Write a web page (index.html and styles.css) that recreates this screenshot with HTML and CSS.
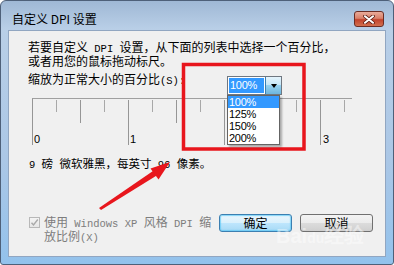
FILE: index.html
```html
<!DOCTYPE html>
<html lang="zh-CN">
<head>
    <meta charset="UTF-8">
    <meta name="viewport" content="width=device-width, initial-scale=1.0">
    <title>自定义 DPI 设置</title>
    <link rel="stylesheet" href="styles.css">
</head>
<body>
    <div class="window">
        <!-- Title bar -->
        <div class="titlebar">
            <span class="title">自定义 DPI 设置</span>
            <span class="close-btn">
                <svg width="12" height="9" viewBox="0 0 12 9">
                    <path d="M2 1.2 L10 7.8 M10 1.2 L2 7.8" stroke="#5a1d14" stroke-width="3.6" stroke-linecap="round"/>
                    <path d="M2 1.2 L10 7.8 M10 1.2 L2 7.8" stroke="#fff" stroke-width="2" stroke-linecap="round"/>
                </svg>
            </span>
        </div>

        <!-- Client area -->
        <div class="client">
            <p class="intro">若要自定义<span class="mono"> DPI </span>设置，从下面的列表中选择一个百分比，<br>或者用您的鼠标拖动标尺。</p>

            <div class="scale-row">
                <span class="scale-label">缩放为正常大小的百分比<span class="mono">(S):</span></span>
                <div class="combo">
                    <span class="combo-value">100%</span>
                    <span class="combo-btn"><span class="arrow-down"></span></span>
                    <ul class="droplist">
                        <li class="selected">100%</li>
                        <li>125%</li>
                        <li>150%</li>
                        <li>200%</li>
                    </ul>
                </div>
            </div>

            <!-- Ruler, the "2" label sits under the open list -->
            <div class="ruler">
                <span class="ruler-label">0</span>
                <span class="ruler-label">1</span>
                <span class="ruler-label"></span>
                <span class="ruler-label">3</span>
            </div>

            <p class="info"><span class="mono">9 </span>磅<span class="mono"> </span>微软雅黑，每英寸<span class="mono"> 96 </span>像素。</p>

            <div class="footer">
                <div class="xp-option">
                    <span class="checkbox">
                        <svg width="9" height="9" viewBox="0 0 9 9">
                            <path d="M1.5 4.8 L3.5 7 L7.8 1.5" stroke="#a9a9a9" stroke-width="1.4" fill="none"/>
                        </svg>
                    </span>
                    <span class="xp-text">使用<span class="mono"> Windows XP </span>风格<span class="mono"> DPI </span>缩<br>放比例<span class="mono">(X)</span></span>
                </div>
                <div class="buttons">
                    <button class="btn btn-default">确定</button>
                    <button class="btn">取消</button>
                </div>
            </div>
        </div>
    </div>

    <!-- Red annotation drawn over the dialog -->
    <svg class="annotation" width="394" height="265" viewBox="0 0 394 265">
        <rect x="183.5" y="64.5" width="120.5" height="84.5" fill="none" stroke="#e8161d" stroke-width="3.5"/>
        <polygon points="99,208 101,210 157.5,175 153,171" fill="#e8161d"/>
        <polygon points="170,162 150.5,168.5 158.5,179.5" fill="#e8161d"/>
    </svg>

    <div class="watermark">Bai<span class="paw">du</span>经验</div>
</body>
</html>
```

FILE: styles.css
```css
/* Dialog window, Windows 7 style */
body {
    margin: 0;
    font-family: "Noto Sans CJK SC", sans-serif;
    font-size: 12px;
    color: #000;
    background-color: #fff;
}

.mono {
    font-family: "Liberation Mono", monospace;
    font-size: 10.5px;
}

.window {
    width: 394px;
    height: 265px;
    box-sizing: border-box;
    border: 1px solid #4e6079;
    border-radius: 6px 6px 3px 3px;
    background: linear-gradient(#9fb8d5 0, #b9cfe7 28px, #abc7e6 60%, #93c2ec 100%);
    display: flex;
    flex-direction: column;
}

/* Title bar */
.titlebar {
    height: 29px;
    display: flex;
    align-items: flex-start;
    padding-left: 11px;
}

.title {
    margin-top: 11px;
    line-height: 14px;
}

.close-btn {
    width: 30px;
    height: 16px;
    box-sizing: border-box;
    margin: 10px 9px 0 auto;
    border: 1px solid #6b2d24;
    border-radius: 3px;
    background: linear-gradient(#e9ab9a 0, #d9806a 45%, #c2432c 55%, #d2704f 100%);
    display: flex;
    align-items: center;
    justify-content: center;
}

/* Client area */
.client {
    height: 227px;
    box-sizing: border-box;
    margin: 0 7px;
    padding: 10px 12px 0 19px;
    border: 1px solid #91a6c1;
    background-color: #f0f0f0;
    display: flex;
    flex-direction: column;
}

.intro {
    margin: 0;
    line-height: 11px;
}

.scale-row {
    display: flex;
    align-items: flex-start;
    margin-top: 7px;
}

.scale-label {
    width: 199px;
    line-height: 12px;
}

/* Combo box */
.combo {
    position: relative;
    width: 55px;
    height: 19px;
    box-sizing: border-box;
    margin-top: 3px;
    border: 1px solid #6f7780;
    background-color: #fff;
    display: flex;
}

.combo-value {
    flex: 1;
    margin: 1px;
    padding-left: 1px;
    background-color: #3399ff;
    color: #fff;
    font-family: "Liberation Sans", sans-serif;
    font-size: 11px;
    line-height: 15px;
    letter-spacing: -0.3px;
}

.combo-btn {
    width: 15px;
    border-left: 1px solid #3c7fb1;
    background: linear-gradient(#e5f4fc 0, #c4e5f6 50%, #98d1ef 50%, #6cb6de 100%);
    display: flex;
    align-items: center;
    justify-content: center;
}

.arrow-down {
    width: 0;
    height: 0;
    border-left: 3.5px solid transparent;
    border-right: 3.5px solid transparent;
    border-top: 4px solid #000;
}

.droplist {
    position: absolute;
    z-index: 2;
    top: 18px;
    left: -1px;
    width: 51px;
    margin: 0;
    padding: 0;
    list-style: none;
    border: 1px solid #646464;
    background-color: #fff;
    box-shadow: 2px 2px 2px rgba(0, 0, 0, 0.3);
    font-family: "Liberation Sans", sans-serif;
    font-size: 11px;
    letter-spacing: -0.3px;
}

.droplist li {
    height: 12px;
    line-height: 12px;
    padding-left: 1px;
}

.droplist li.selected {
    background-color: #3399ff;
    color: #fff;
}

/* Ruler */
.ruler {
    width: 320px;
    height: 47px;
    box-sizing: border-box;
    margin: 3px 0 0 4px;
    border-top: 1px solid #a0a0a0;
    border-left: 1px solid #969696;
    background:
        repeating-linear-gradient(to right, transparent 0 95px, #969696 95px 96px) 0 1px / 100% 100% no-repeat,
        repeating-linear-gradient(to right, transparent 0 47px, #969696 47px 48px, transparent 48px 96px) 0 1px / 100% 23px no-repeat,
        repeating-linear-gradient(to right, transparent 0 23px, #a8a8a8 23px 24px, transparent 24px 48px) 0 1px / 100% 12px no-repeat;
    display: flex;
    align-items: flex-end;
}

.ruler-label {
    flex: none;
    width: 96px;
    height: 11px;
    padding-left: 1px;
    box-sizing: border-box;
    font-family: "Liberation Sans", sans-serif;
    font-size: 11px;
    line-height: 11px;
}

.ruler-label:last-child {
    width: auto;
    padding-left: 2px;
}

.info {
    margin: 12px 0 0 1px;
    font-size: 11.5px;
    line-height: 12px;
}

/* Bottom row */
.footer {
    margin-top: auto;
    margin-bottom: 12px;
    display: flex;
    align-items: flex-start;
}

.xp-option {
    display: flex;
    align-items: flex-start;
    margin: 2px 0 0 1px;
    color: #7d7d7d;
}

.checkbox {
    width: 11px;
    height: 11px;
    box-sizing: border-box;
    margin: 1px 4px 0 0;
    border: 1px solid #b8b8b8;
    background: linear-gradient(#f4f4f4, #e6e6e6);
    display: flex;
    align-items: center;
    justify-content: center;
}

.xp-text {
    line-height: 11px;
}

.buttons {
    margin-left: auto;
    display: flex;
    gap: 8px;
}

.btn {
    width: 73px;
    height: 18px;
    box-sizing: border-box;
    padding: 0;
    border: 1px solid #707070;
    border-radius: 3px;
    background: linear-gradient(#f3f3f3 0, #ebebeb 50%, #dcdcdc 50%, #cfcfcf 100%);
    font-family: "Noto Sans CJK SC", sans-serif;
    font-size: 12px;
    line-height: 16px;
    color: #000;
}

.btn-default {
    border-color: #3c7fb1;
    box-shadow: inset 0 0 1px 1px rgba(90, 200, 245, 0.7);
    background: linear-gradient(#eaf6fd 0, #d9f0fc 50%, #bee6fd 50%, #a7d9f5 100%);
}

/* Overlays */
.annotation {
    position: absolute;
    left: 0;
    top: 0;
    pointer-events: none;
}

.watermark {
    position: absolute;
    left: 276px;
    top: 224px;
    font-family: "Liberation Sans", sans-serif;
    font-size: 20px;
    font-weight: bold;
    line-height: 24px;
    color: rgba(255, 255, 255, 0.45);
    pointer-events: none;
}

.paw {
    font-size: 14px;
}
```
